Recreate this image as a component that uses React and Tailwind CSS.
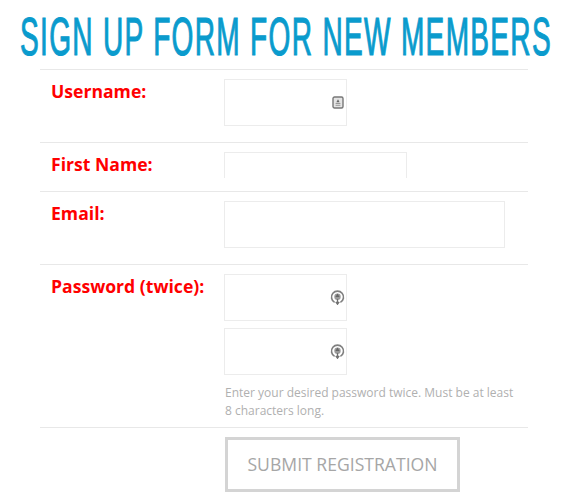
import React from 'react';

function ContactIcon() {
  return (
    <svg width="12" height="13" viewBox="0 0 12 13" className="absolute right-[2px] top-[16px]">
      <rect x="1" y="1" width="10" height="11" rx="1.5" fill="#e4e4e4" stroke="#777" strokeWidth="1.4" />
      <path d="M6 3.2 L7.6 6.2 H4.4 Z" fill="#666" />
      <path d="M3.6 7.5 H8.4 M3.6 9.3 H8.4" stroke="#999" strokeWidth="1" />
    </svg>
  );
}

function KeyIcon() {
  return (
    <svg width="15" height="15" viewBox="0 0 15 15" className="absolute right-[1px] top-[15px]">
      <path d="M4.6 12.4 A6 6 0 1 1 10.4 12.4" fill="none" stroke="#808080" strokeWidth="1.6" />
      <circle cx="7.5" cy="6.8" r="3.2" fill="#9a9a9a" />
      <path d="M7.5 3.6 L9.6 7 H5.4 Z" fill="#666" />
      <path d="M7.5 9 V14 M5.8 11.8 L7.5 14.2 L9.2 11.8" fill="none" stroke="#707070" strokeWidth="1.3" />
    </svg>
  );
}

function Field({ className, icon }) {
  return (
    <div className={`relative -ml-px border border-[#ececec] bg-white ${className}`}>
      {icon}
    </div>
  );
}

function Row({ label, className, children }) {
  return (
    <div className={`flex border-t border-[#e8e8e8] ${className}`}>
      <label className="w-[185px] pl-[11px] text-[17.6px] leading-[25px] font-bold text-[#ff0000] shrink-0">{label}</label>
      <div className="flex-1">{children}</div>
    </div>
  );
}

export default function App() {
  return (
    <div className="w-[575px] h-[504px] overflow-hidden bg-white font-['Open_Sans',sans-serif]">
      <div className="h-[69px] pl-[20px] pt-[7px]">
        <h1 className="w-max origin-left scale-x-[0.52] whitespace-nowrap font-['Liberation_Sans',sans-serif] font-normal text-[54px] leading-[58px] tracking-[2.5px] text-[#0a9bcd] [-webkit-text-stroke:1.2px_#0a9bcd]">
          SIGN UP FORM FOR NEW MEMBERS
        </h1>
      </div>
      <div className="mx-[40px] w-[488px]">
        <Row label="Username:" className="h-[73px] pt-[9px]">
          <Field className="w-[123px] h-[47px]" icon={<ContactIcon />} />
        </Row>
        <Row label="First Name:" className="h-[49px] pt-[9px]">
          <div className="-ml-px w-[183px] h-[26px] border border-b-0 border-[#ececec]" />
        </Row>
        <Row label="Email:" className="h-[73px] pt-[9px]">
          <Field className="w-[281px] h-[47px]" />
        </Row>
        <Row label="Password (twice):" className="h-[163px] pt-[9px]">
          <Field className="w-[123px] h-[47px]" icon={<KeyIcon />} />
          <Field className="w-[123px] h-[47px] mt-[7px]" icon={<KeyIcon />} />
          <p className="mt-[9px] w-[295px] text-[12px] leading-[18px] text-[#b0b0b0]">
            Enter your desired password twice. Must be at least 8 characters long.
          </p>
        </Row>
        <div className="flex border-t border-[#e8e8e8] pt-[9px]">
          <div className="w-[185px] shrink-0" />
          <button className="w-[235px] h-[55px] border-[3px] border-[#d4d4d4] bg-white text-[17.6px] text-[#a6a6a6]">
            SUBMIT REGISTRATION
          </button>
        </div>
      </div>
    </div>
  );
}
